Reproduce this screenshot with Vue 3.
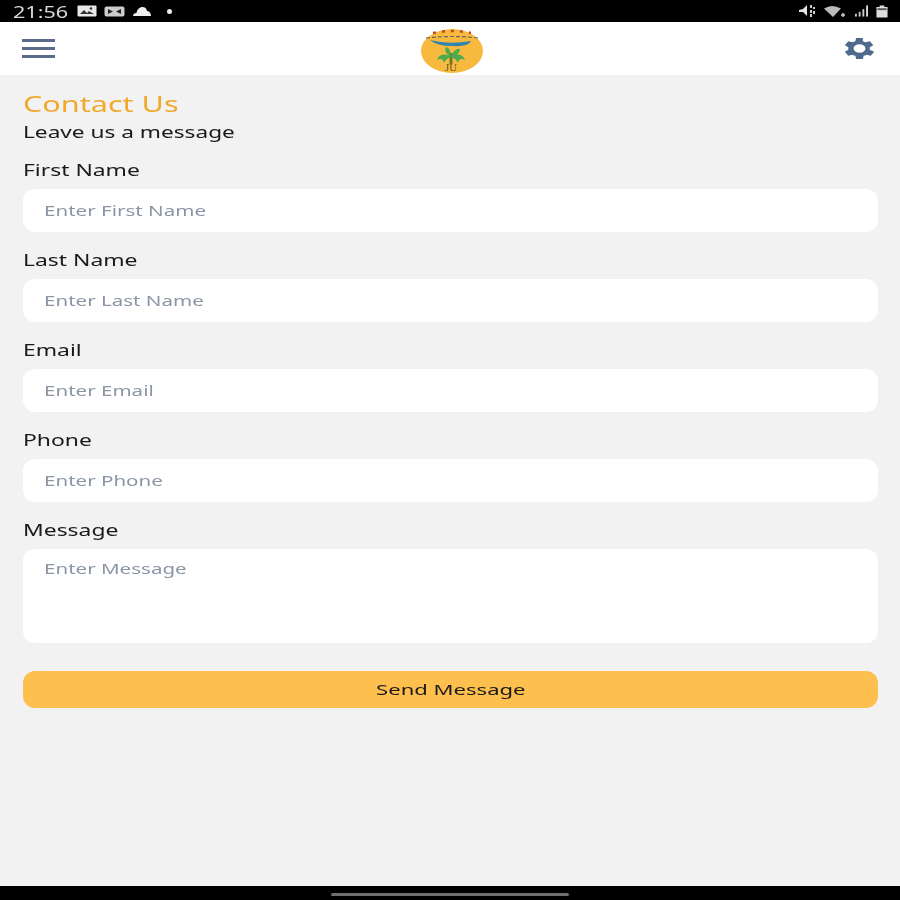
<template>
  <div class="screen">
    <div class="status-bar">
      <div class="status-left">
        <span class="clock"><span>21:56</span></span>
        <svg class="st-icon" width="20" height="12" viewBox="0 0 20 12">
          <rect x="0.5" y="0.5" width="19" height="11" rx="1" fill="#e8e8e8" />
          <path d="M3 9l4-4 3 3 2-2 5 3z" fill="#333" />
          <circle cx="14" cy="3.5" r="1.3" fill="#333" />
        </svg>
        <svg class="st-icon" width="21" height="11" viewBox="0 0 21 11">
          <rect x="0.5" y="0.5" width="20" height="10" rx="2" fill="#ccc" />
          <path d="M4 3l5 2.5L4 8zM17 3l-5 2.5L17 8z" fill="#222" />
        </svg>
        <svg class="st-icon" width="20" height="10" viewBox="0 0 20 10">
          <path d="M1 10c0-2 1.500-3 3.500-3C5 3.500 7.500 1 10.500 1c2.500 0 4 1.500 4.500 4 2.500 0 4 2.500 4 5z" fill="#eee" />
        </svg>
        <span class="dot"></span>
      </div>
      <div class="status-right">
        <svg class="st-mute" width="20" height="14" viewBox="0 0 20 14">
          <path d="M1 6l4-1 4-4v11L5 8H1z" fill="#e4e4e4" />
          <path d="M13 1v3M13 6v3M13 10v3M16 3v2M16 7v3" stroke="#ccc" stroke-width="2" />
        </svg>
        <svg class="st-wifi" width="22" height="13" viewBox="0 0 22 13">
          <path d="M1 3.500Q9-1.500 18 3.500L10 12z" fill="#bbb" />
          <path d="M18 10h4M20 8v4" stroke="#ccc" stroke-width="1.500" />
        </svg>
        <svg class="st-signal" width="13" height="12" viewBox="0 0 14 12">
          <rect x="0" y="9" width="2" height="3" fill="#ccc" />
          <rect x="4" y="7" width="2" height="5" fill="#ccc" />
          <rect x="8" y="4" width="2" height="8" fill="#ccc" />
          <rect x="12" y="0" width="2" height="12" fill="#ddd" />
        </svg>
        <svg class="st-battery" width="12" height="13" viewBox="0 0 13 13">
          <path d="M4 0h5v1.500h3.500V13H.5V1.500H4z" fill="#ddd" />
          <rect x="1.500" y="3" width="10" height="2" fill="#555" />
        </svg>
      </div>
    </div>

    <header class="top-bar">
      <div class="burger">
        <span></span><span></span><span></span>
      </div>
      <svg class="logo" width="66" height="48" viewBox="0 0 66 48">
        <ellipse cx="33" cy="24" rx="31" ry="22" fill="#f8b93f" />
        <path d="M14 6Q33 2 52 6" fill="none" stroke="#c0472a" stroke-width="2.500" stroke-dasharray="3 6" />
        <path d="M7 11Q33 8 60 11" fill="none" stroke="#666" stroke-width="1.200" stroke-dasharray="4 2" />
        <path d="M11 13Q30 18 52 14Q50 20 33 19Q18 19 11 13z" fill="#2f85b0" />
        <path d="M32 26v11" stroke="#6e7a2a" stroke-width="3" />
        <path d="M32 30c-5-4-12-3-14 3 4-2 6-1 7 3 1-3 4-5 7-6zM32 30c5-4 12-3 14 3-4-2-6-1-7 3-1-3-4-5-7-6zM32 30c-5-3-7-7-5-10 4 1 5 5 5 10zM32 30c2-5 5-9 9-8 0 4-4 7-9 8z" fill="#4cab4c" />
        <text x="32" y="44" class="logo-text">JU</text>
      </svg>
      <svg class="gear" width="41" height="29" viewBox="0 0 24 24" preserveAspectRatio="none">
        <path fill-rule="evenodd" d="M19.400 13a7.600 7.600 0 0 0 0-2l2.100-1.600-2-3.500-2.500 1a7.500 7.500 0 0 0-1.700-1L15.400 3.300h-4l-.4 2.600a7.500 7.500 0 0 0-1.700 1l-2.500-1-2 3.500L6.900 11a7.600 7.600 0 0 0 0 2l-2.100 1.600 2 3.500 2.500-1a7.500 7.500 0 0 0 1.700 1l.4 2.600h4l.4-2.600a7.500 7.500 0 0 0 1.700-1l2.500 1 2-3.500zM13.400 15.500a3.500 3.500 0 1 1 0-7 3.500 3.500 0 0 1 0 7z" fill="#4f6a8c" transform="translate(-1.400 0)" />
      </svg>
    </header>

    <main class="content">
      <h1 class="title"><span>Contact Us</span></h1>
      <p class="subtitle"><span>Leave us a message</span></p>
      <div v-for="f in fields" :key="f.label" class="field">
        <label class="label"><span>{{ f.label }}</span></label>
        <div class="input" :class="{ area: f.area }"><span>{{ f.placeholder }}</span></div>
      </div>
      <button class="send"><span>Send Message</span></button>
    </main>

    <div class="nav-bar"><div class="handle"></div></div>
  </div>
</template>

<script setup>
const fields = [
  { label: 'First Name', placeholder: 'Enter First Name' },
  { label: 'Last Name', placeholder: 'Enter Last Name' },
  { label: 'Email', placeholder: 'Enter Email' },
  { label: 'Phone', placeholder: 'Enter Phone' },
  { label: 'Message', placeholder: 'Enter Message', area: true }
]
</script>

<style>
html, body {
  margin: 0;
  background: #f2f2f2;
}
</style>

<style scoped>
.screen {
  width: 900px;
  height: 900px;
  display: flex;
  flex-direction: column;
  background: #f2f2f2;
  font-family: "Noto Sans", "Open Sans", sans-serif;
  overflow: hidden;
  filter: blur(0.5px);
}

.status-bar {
  height: 22px;
  flex: none;
  background: #000;
  display: flex;
  justify-content: space-between;
  align-items: center;
  padding: 0 12px 0 13px;
}
.status-left, .status-right {
  display: flex;
  align-items: center;
}
.status-left { gap: 7px; }
.clock {
  color: #d8d8d8;
  font-size: 17px;
  width: 57px;
}
.clock span {
  display: inline-block;
  transform: scaleX(1.27);
  transform-origin: left center;
}
.dot {
  width: 5px;
  height: 5px;
  border-radius: 50%;
  background: #eee;
  margin-left: 8px;
}
.st-wifi { margin-left: 5px; }
.st-signal { margin-left: 10px; }
.st-battery { margin-left: 8px; }

.top-bar {
  height: 53px;
  flex: none;
  background: #fff;
  display: flex;
  justify-content: space-between;
  align-items: center;
  padding: 0 20px 0 22px;
  position: relative;
}
.burger {
  width: 33px;
  display: flex;
  flex-direction: column;
  gap: 5px;
}
.burger span {
  height: 3px;
  background: #5a6b8c;
}
.logo {
  position: absolute;
  left: 419px;
  top: 5px;
}
.logo-text {
  font-family: "Liberation Serif", serif;
  font-size: 11px;
  text-anchor: middle;
  fill: #6a5a20;
}

.content {
  flex: 1;
  padding: 15px 22px 0 23px;
}
.title, .subtitle, .label, .input, .send {
  font-weight: 400;
}
.title span, .subtitle span, .label span, .input span, .send span {
  display: inline-block;
  transform-origin: left center;
}
.title {
  margin: 0;
  color: #f0a92c;
  font-size: 22px;
  line-height: 26px;
}
.title span { transform: scaleX(1.39); }
.subtitle {
  margin: 4px 0 0;
  color: #1a1a1a;
  font-size: 16px;
  line-height: 24px;
}
.subtitle span { transform: scaleX(1.415); }
.field {
  margin-top: 15px;
}
.field + .field {
  margin-top: 17px;
}
.label {
  display: block;
  color: #1a1a1a;
  font-size: 16px;
  line-height: 22px;
  height: 22px;
}
.label span { transform: scaleX(1.43); }
.input {
  height: 43px;
  margin-top: 8px;
  background: #fff;
  border-radius: 12px;
  padding: 0 21px 2px;
  box-sizing: border-box;
  display: flex;
  align-items: center;
  color: #8b96a5;
  font-size: 15px;
}
.input span { transform: scaleX(1.37); }
.input.area {
  height: 94px;
  align-items: flex-start;
  padding-top: 9px;
}
.send {
  display: block;
  width: 100%;
  height: 37px;
  margin-top: 28px;
  padding: 0 0 2px;
  border: none;
  border-radius: 12px;
  background: #fdbf4d;
  color: #1a1a1a;
  font-family: inherit;
  font-size: 15px;
  text-align: center;
}
.send span {
  transform: scaleX(1.47);
  transform-origin: center;
}

.nav-bar {
  height: 14px;
  flex: none;
  background: #000;
  display: flex;
  justify-content: center;
  align-items: center;
}
.handle {
  width: 238px;
  height: 3px;
  border-radius: 2px;
  background: #6e6e6e;
  margin-top: 2px;
}
</style>
